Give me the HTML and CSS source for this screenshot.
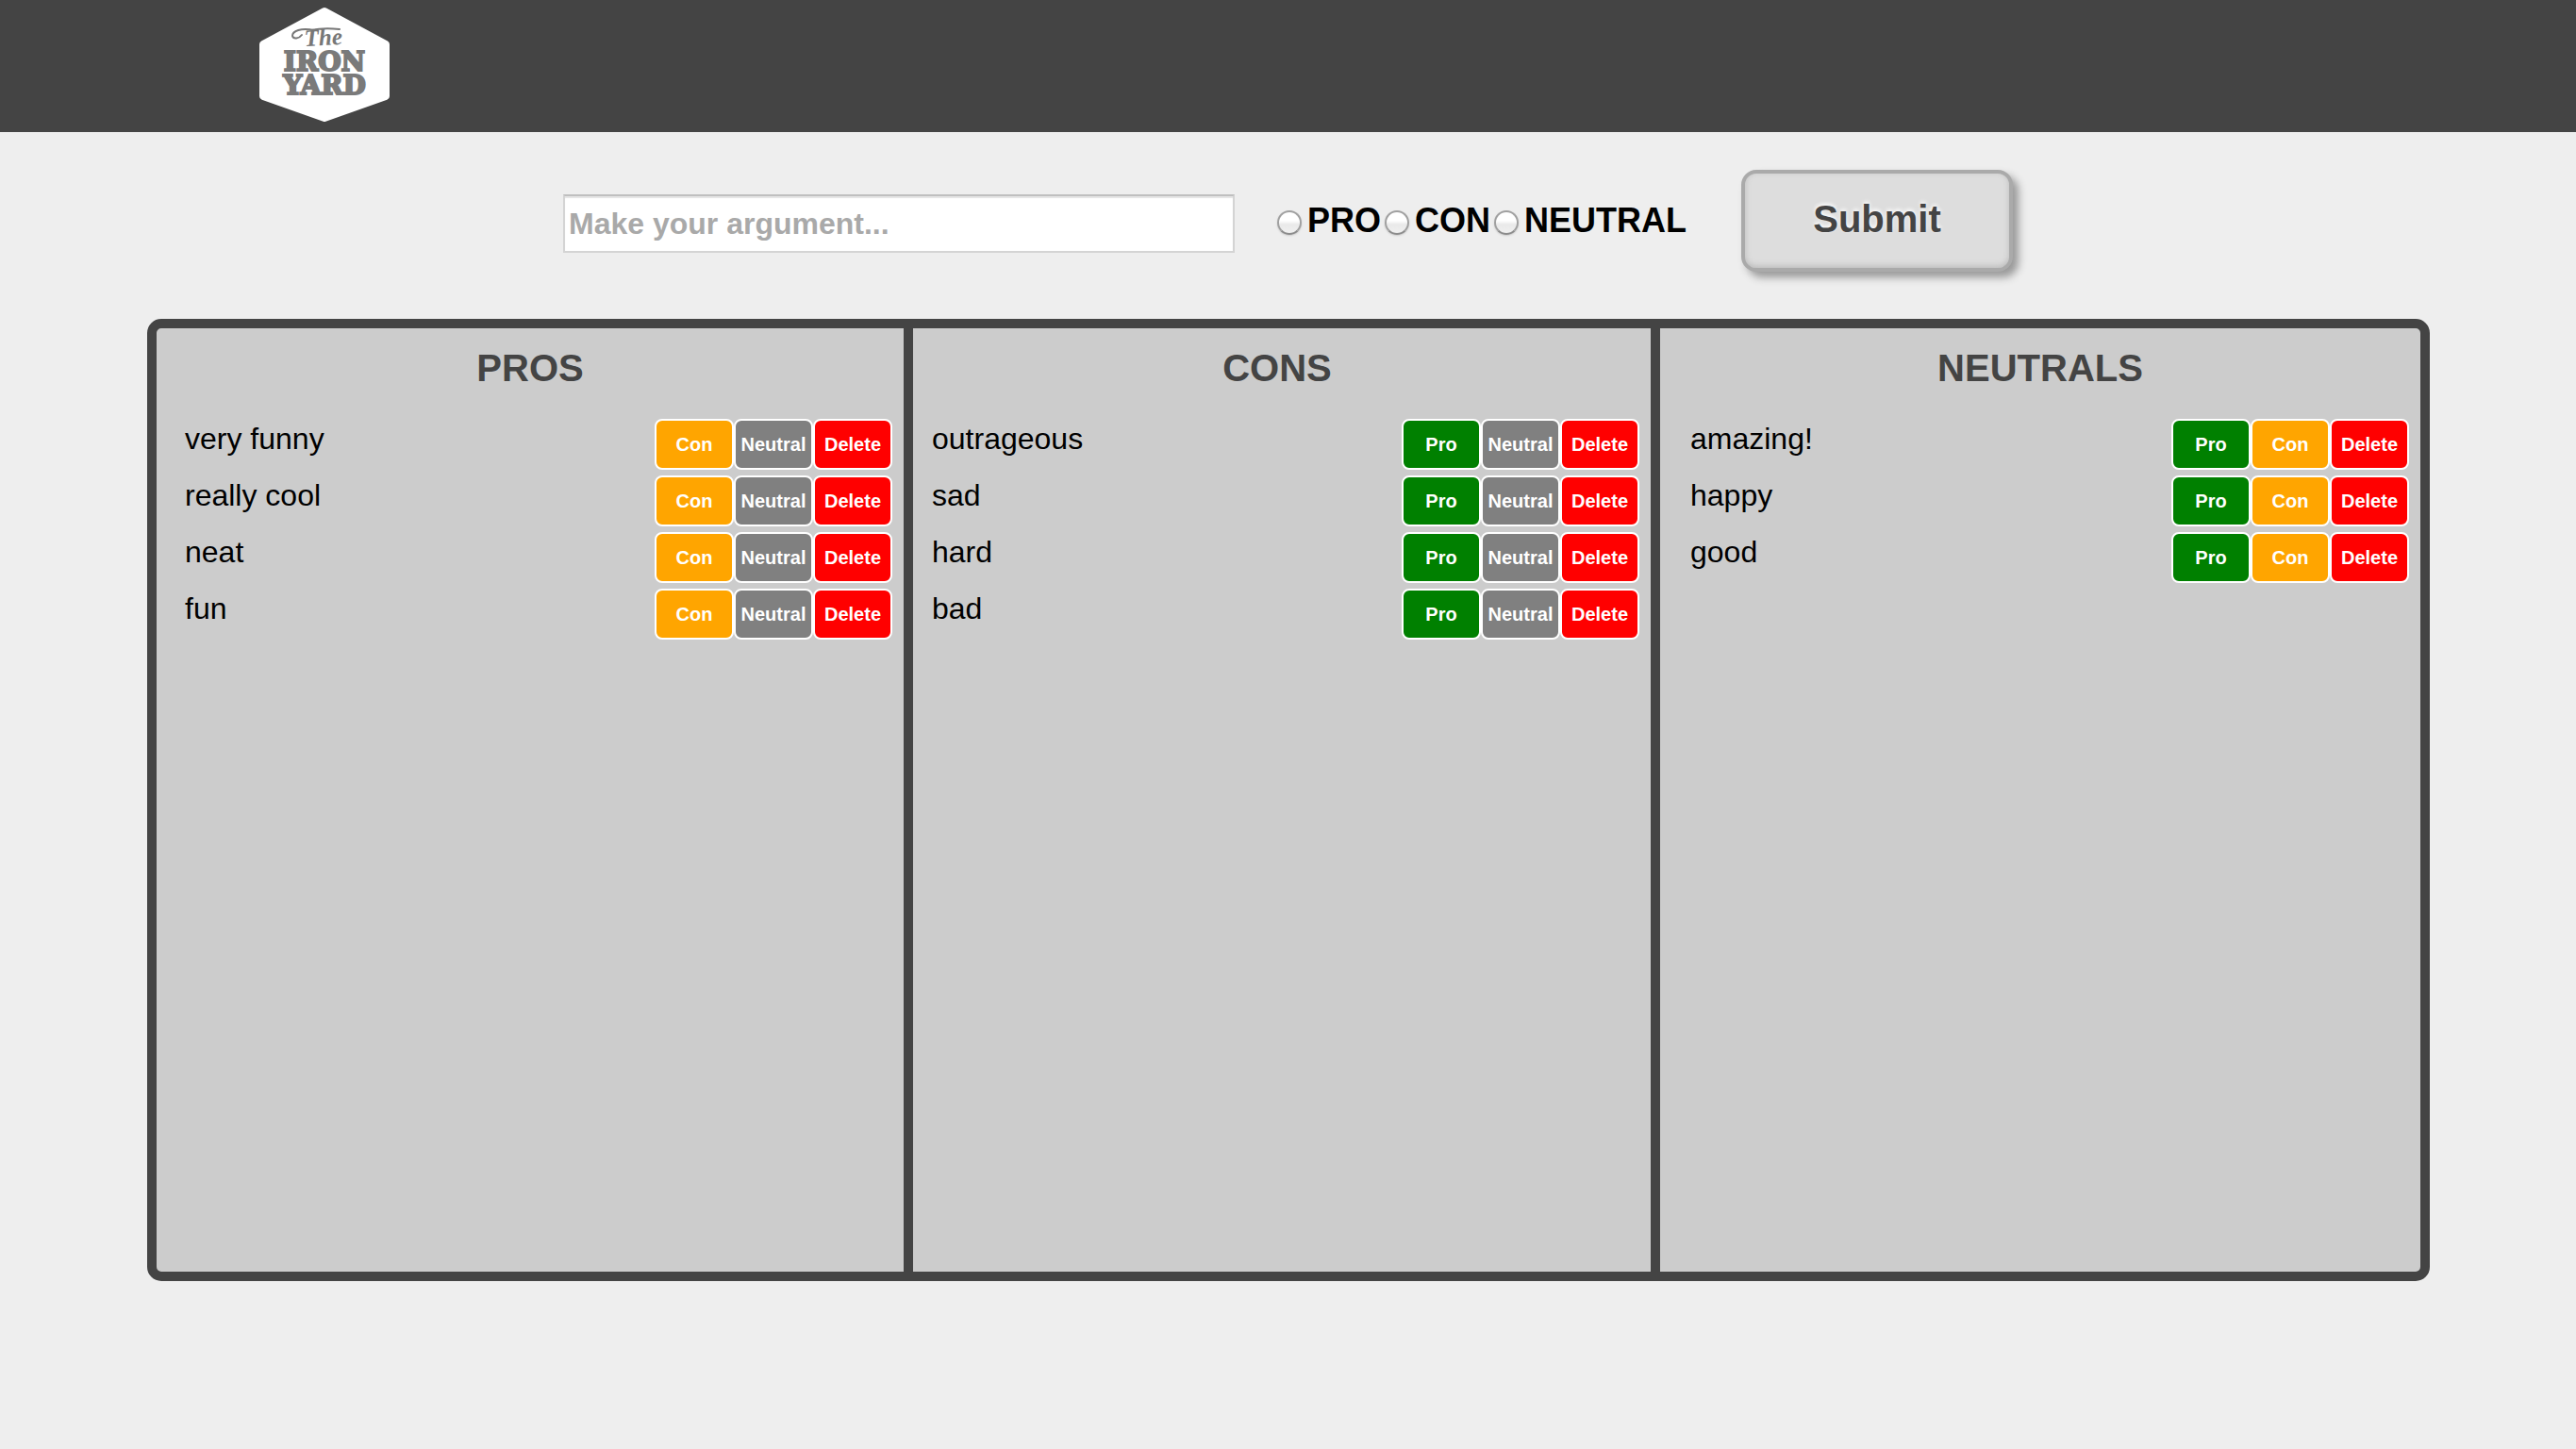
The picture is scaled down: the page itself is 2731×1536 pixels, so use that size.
FILE: index.html
```html
<!DOCTYPE html>
<html lang="en">
<head>
<meta charset="utf-8">
<title>Pros and Cons</title>
<link rel="stylesheet" href="styles.css">
</head>
<body>
<header class="site-header">
  <svg class="logo" viewBox="0 0 142 140" role="img" aria-label="The Iron Yard">
    <path class="logo-badge" d="M71 12 L136 47 V102 L71 125 L6 102 V47 Z"/>
    <path class="logo-swash" d="M60 32 C46 29 37 33 37 38 C38 42 44 41 47 37 M58 32 C66 30 76 30 87 31"/>
    <text class="logo-the" x="50" y="49" transform="rotate(-3 50 49)">The</text>
    <text class="logo-name" x="71" y="75">IRON</text>
    <text class="logo-name" x="71" y="100">YARD</text>
  </svg>
</header>
<main>
  <form class="argument-form">
    <input class="argument-text" type="text" placeholder="Make your argument..." aria-label="Your argument">
    <div class="choices">
      <label class="choice"><input class="radio" type="radio" name="side" value="pro">PRO</label>
      <label class="choice"><input class="radio" type="radio" name="side" value="con">CON</label>
      <label class="choice"><input class="radio" type="radio" name="side" value="neutral">NEUTRAL</label>
    </div>
    <button class="submit" type="button">Submit</button>
  </form>
  <div class="board">
    <section class="column">
      <h2>PROS</h2>
      <ul class="items">
        <li><span>very funny</span><button type="button" class="tag con">Con</button><button type="button" class="tag neutral">Neutral</button><button type="button" class="tag delete">Delete</button></li>
        <li><span>really cool</span><button type="button" class="tag con">Con</button><button type="button" class="tag neutral">Neutral</button><button type="button" class="tag delete">Delete</button></li>
        <li><span>neat</span><button type="button" class="tag con">Con</button><button type="button" class="tag neutral">Neutral</button><button type="button" class="tag delete">Delete</button></li>
        <li><span>fun</span><button type="button" class="tag con">Con</button><button type="button" class="tag neutral">Neutral</button><button type="button" class="tag delete">Delete</button></li>
      </ul>
    </section>
    <section class="column cons">
      <h2>CONS</h2>
      <ul class="items">
        <li><span>outrageous</span><button type="button" class="tag pro">Pro</button><button type="button" class="tag neutral">Neutral</button><button type="button" class="tag delete">Delete</button></li>
        <li><span>sad</span><button type="button" class="tag pro">Pro</button><button type="button" class="tag neutral">Neutral</button><button type="button" class="tag delete">Delete</button></li>
        <li><span>hard</span><button type="button" class="tag pro">Pro</button><button type="button" class="tag neutral">Neutral</button><button type="button" class="tag delete">Delete</button></li>
        <li><span>bad</span><button type="button" class="tag pro">Pro</button><button type="button" class="tag neutral">Neutral</button><button type="button" class="tag delete">Delete</button></li>
      </ul>
    </section>
    <section class="column neutrals">
      <h2>NEUTRALS</h2>
      <ul class="items">
        <li><span>amazing!</span><button type="button" class="tag pro">Pro</button><button type="button" class="tag con">Con</button><button type="button" class="tag delete">Delete</button></li>
        <li><span>happy</span><button type="button" class="tag pro">Pro</button><button type="button" class="tag con">Con</button><button type="button" class="tag delete">Delete</button></li>
        <li><span>good</span><button type="button" class="tag pro">Pro</button><button type="button" class="tag con">Con</button><button type="button" class="tag delete">Delete</button></li>
      </ul>
    </section>
  </div>
</main>
</body>
</html>
```
FILE: styles.css
```css
* { box-sizing: border-box; }

body {
  margin: 0;
  background: #eee;
  color: #000;
  font: 32px/42px "Liberation Sans", Arial, sans-serif;
}

button, input { font-family: inherit; }

/* Header */
.site-header {
  display: flex;
  padding: 0 10%;
  background: #444;
}
.logo { width: 142px; height: 140px; }
.logo-badge {
  fill: #fff;
  stroke: #fff;
  stroke-width: 8px;
  stroke-linejoin: round;
}
.logo-swash {
  fill: none;
  stroke: #777;
  stroke-width: 2px;
  stroke-linecap: round;
}
.logo-the {
  fill: #777;
  font: italic bold 25px "Liberation Serif", serif;
}
.logo-name {
  fill: #7a7a7a;
  stroke: #7a7a7a;
  stroke-width: 2px;
  text-anchor: middle;
  font: bold 28px "DejaVu Serif", serif;
}

/* Argument form */
.argument-form {
  display: flex;
  flex-wrap: wrap;
  align-items: center;
  justify-content: center;
  padding: 40px 20px 50px;
}
.argument-text {
  width: 712px;
  height: 62px;
  margin: 6px 41px 0 0;
  padding: 0 4px;
  border: 2px solid #d4d4d4;
  border-top-color: #bfbfbf;
  border-radius: 0;
  background: #fff;
  box-shadow: inset 0 2px 1px #e4e4e4;
  font-size: 32px;
  font-weight: bold;
}
.argument-text::placeholder { color: #a9a9a9; opacity: 1; }
.choices {
  display: flex;
  margin-right: 58px;
  font-size: 36px;
  font-weight: bold;
}
.choice { display: flex; align-items: center; }
.radio {
  appearance: none;
  width: 26px;
  height: 26px;
  margin: 4px 6px 0 4px;
  border: 2px solid #a0a0a0;
  border-bottom-color: #8c8c8c;
  border-radius: 50%;
  background: linear-gradient(#fff 0 40%, #e9e9e9 60%, #f0f0f0);
  box-shadow: 0 1px 2px #ccc;
}
.radio:checked { background: radial-gradient(#444 0 35%, #f4f4f4 40%); }
.submit {
  width: 288px;
  height: 108px;
  padding: 0 0 4px;
  border: 4px solid #aaa;
  border-radius: 16px;
  background: #ddd;
  box-shadow: 6px 6px 8px #999, inset 0 -2px 6px #bbb;
  color: #444;
  font-size: 40px;
  font-weight: bold;
  text-shadow: 0 -2px 4px #fff;
}

/* Board */
.board {
  display: grid;
  grid-template-columns: 33% 33% 1fr;
  min-height: 1020px;
  margin: 0 155px 0 156px;
  border: 10px solid #444;
  border-radius: 15px;
  background: #ccc;
}
.column { padding-top: 20px; }
.cons { box-shadow: inset 10px 0 #444; }
.neutrals { border-left: 10px solid #444; }
.column h2 {
  margin: 0 0 32px;
  color: #444;
  font-size: 40px;
  line-height: 44px;
  text-align: center;
}
.items {
  display: grid;
  gap: 6px;
  margin: 0;
  padding: 0 12px 0 30px;
  list-style: none;
}
.neutrals .items { padding-left: 32px; }
.items li { display: flex; align-items: flex-start; }
.items span { flex: 1; }
.tag {
  width: 84px;
  height: 54px;
  padding: 0;
  border: 2px solid #fff;
  border-radius: 8px;
  color: #fff;
  font-size: 20px;
  font-weight: bold;
}
.pro { background: green; }
.con { background: orange; }
.neutral { background: gray; }
.delete { background: red; }
```
